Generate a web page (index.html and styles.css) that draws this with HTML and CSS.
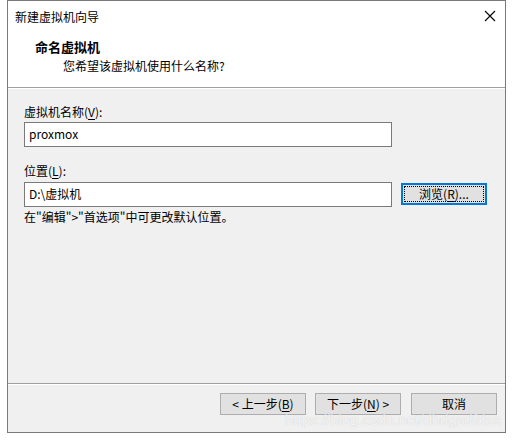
FILE: index.html
```html
<!DOCTYPE html>
<html lang="zh-CN">
<head>
<meta charset="utf-8">
<title>新建虚拟机向导</title>
<link rel="stylesheet" href="styles.css">
</head>
<body>
<div class="window">
  <div class="titlebar">
    <span class="title">新建虚拟机向导</span>
    <svg class="close" width="12" height="12" viewBox="0 0 12 12"><path d="M1 1 L11 11 M11 1 L1 11" stroke="#000" stroke-width="1.1" fill="none"/></svg>
  </div>
  <div class="header">
    <div class="h-title">命名虚拟机</div>
    <div class="h-sub">您希望该虚拟机使用什么名称?</div>
  </div>
  <div class="content">
    <div class="label">虚拟机名称(<u>V</u>):</div>
    <div class="input">proxmox</div>
    <div class="label label2">位置(<u>L</u>):</div>
    <div class="row">
      <div class="input">D:\虚拟机</div>
      <div class="btn btn-focus"><span class="focus">浏览(<u>R</u>)...</span></div>
    </div>
    <div class="hint">在"编辑"&gt;"首选项"中可更改默认位置。</div>
  </div>
  <div class="footer">
    <div class="btn">&lt; 上一步(<u>B</u>)</div>
    <div class="btn">下一步(<u>N</u>) &gt;</div>
    <div class="btn btn-gap">取消</div>
  </div>
  <div class="watermark">https://blog.csdn.net/dhdgsdfdsa</div>
</div>
</body>
</html>
```
FILE: styles.css
```css
html, body {
  margin: 0;
  padding: 0;
  background: #ffffff;
}
body {
  font-family: "Noto Sans CJK SC", "Noto Sans", sans-serif;
  font-size: 12px;
  color: #000;
}
.window {
  position: relative;
  margin-left: 7px;
  width: 497px;
  height: 431px;
  border: 1px solid #7a7a7a;
  background: #f0f0f0;
  display: flex;
  flex-direction: column;
  overflow: hidden;
}
.titlebar {
  height: 30px;
  background: #fff;
  display: flex;
  align-items: center;
  justify-content: space-between;
  padding: 0 9px 0 7px;
  line-height: 16px;
}
.title { margin-top: 1px; }
.close { margin-right: 0; margin-top: 0; }
.header {
  background: #fff;
  height: 56px;
  padding-left: 27px;
  border-bottom: 1px solid #a0a0a0;
  box-shadow: 0 1px 0 #fff;
}
.h-title {
  font-weight: bold;
  font-size: 13px;
  line-height: 18px;
  margin-top: 7px;
}
.h-sub {
  padding-left: 28px;
  line-height: 18px;
  margin-top: 1px;
}
.content {
  flex: 1;
  padding: 16px 0 0 16px;
}
.label {
  line-height: 16px;
  height: 16px;
  margin-bottom: 2px;
}
.label2 { margin-top: 16px; margin-bottom: 3px; }
.input {
  box-sizing: border-box;
  width: 368px;
  height: 25px;
  border: 1px solid #7a7a7a;
  background: #fff;
  padding: 0 4px;
  line-height: 22px;
  font-size: 12px;
}
u { text-decoration: underline; text-underline-offset: 2px; }
.row {
  display: flex;
  align-items: flex-start;
  gap: 9px;
}
.btn {
  box-sizing: border-box;
  width: 86px;
  height: 22px;
  border: 1px solid #adadad;
  background: #e1e1e1;
  display: flex;
  align-items: center;
  justify-content: center;
  line-height: 16px;
}
.btn-focus {
  margin-top: 1px;
  border: 2px solid #0078d7;
  padding: 1px;
}
.focus {
  flex: 1;
  align-self: stretch;
  display: flex;
  align-items: center;
  justify-content: center;
  border: 1px dotted #000;
}
.hint {
  margin-top: 2px;
  line-height: 16px;
}
.footer {
  height: 39px;
  border-top: 1px solid #a0a0a0;
  box-shadow: inset 0 1px 0 #fff;
  display: flex;
  justify-content: flex-end;
  align-items: flex-start;
  padding: 9px 8px 0 0;
  gap: 9px;
}
.btn-gap { margin-left: 1px; }
.watermark {
  position: absolute;
  right: 4px;
  bottom: 4px;
  font-family: "Liberation Sans", sans-serif;
  font-size: 15px;
  color: rgba(255, 255, 255, 0.75);
  text-shadow: 0 0 1px rgba(120, 120, 120, 0.35);
  pointer-events: none;
}
```
